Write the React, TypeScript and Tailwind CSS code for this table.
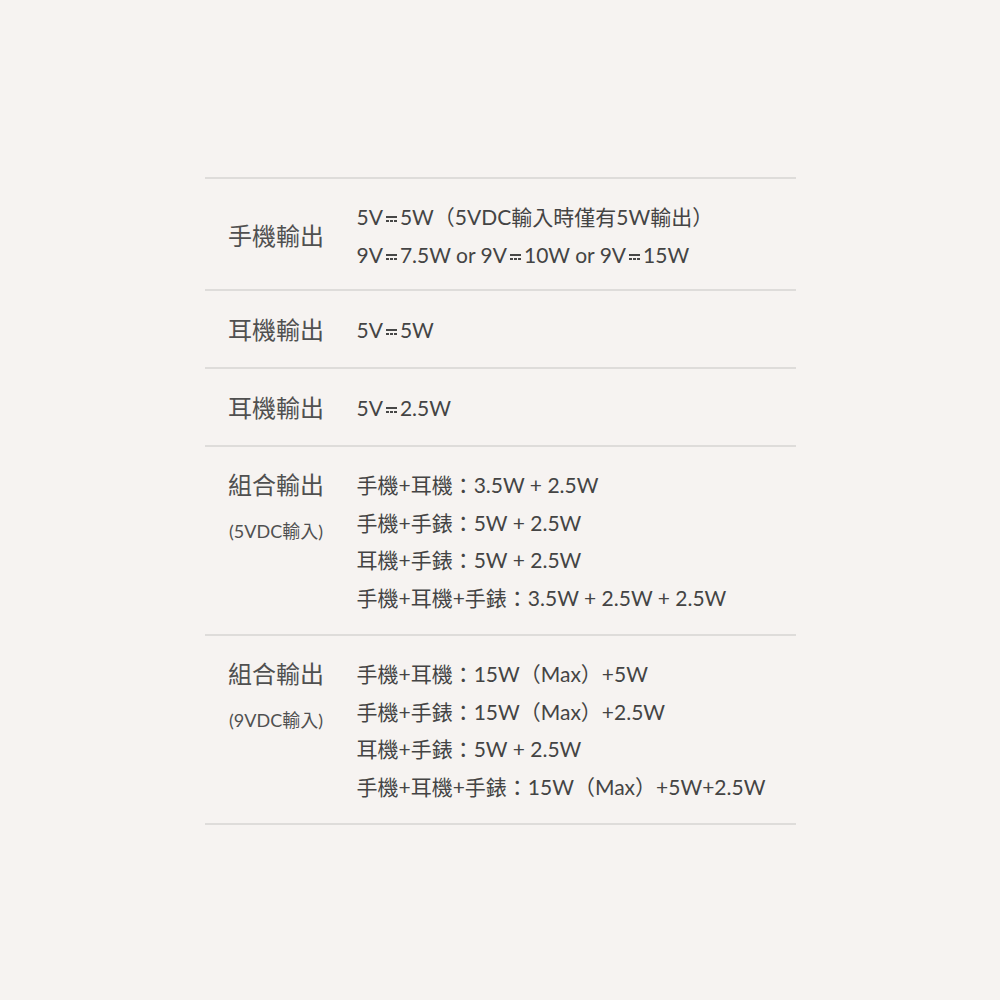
const font = {
  fontFamily: '"Lato", "Noto Sans CJK TC", sans-serif',
};

function Dc() {
  return (
    <span className="inline-flex flex-col justify-center gap-[2px] mx-[3px] align-middle w-[11px] h-[7px] relative -top-[1px]">
      <span className="block h-[2px] bg-[#474747]" />
      <span className="flex justify-between">
        <span className="block w-[3px] h-[2px] bg-[#474747]" />
        <span className="block w-[3px] h-[2px] bg-[#474747]" />
        <span className="block w-[3px] h-[2px] bg-[#474747]" />
      </span>
    </span>
  );
}

interface Row {
  label: string;
  sub?: string;
  pad: string;
  lines: React.ReactNode[];
}

const rows: Row[] = [
  {
    label: "手機輸出",
    pad: "pt-[19px] pb-[15px]",
    lines: [
      <>5V<Dc />5W（5VDC輸入時僅有5W輸出）</>,
      <>9V<Dc />7.5W or 9V<Dc />10W or 9V<Dc />15W</>,
    ],
  },
  { label: "耳機輸出", pad: "pt-[20px] pb-[18px]", lines: [<>5V<Dc />5W</>] },
  { label: "耳機輸出", pad: "pt-[20px] pb-[18px]", lines: [<>5V<Dc />2.5W</>] },
  {
    label: "組合輸出",
    sub: "(5VDC輸入)",
    pad: "pt-[19px] pb-[17px]",
    lines: [
      "手機+耳機：3.5W + 2.5W",
      "手機+手錶：5W + 2.5W",
      "耳機+手錶：5W + 2.5W",
      "手機+耳機+手錶：3.5W + 2.5W + 2.5W",
    ],
  },
  {
    label: "組合輸出",
    sub: "(9VDC輸入)",
    pad: "pt-[19px] pb-[17px]",
    lines: [
      "手機+耳機：15W（Max）+5W",
      "手機+手錶：15W（Max）+2.5W",
      "耳機+手錶：5W + 2.5W",
      "手機+耳機+手錶：15W（Max）+5W+2.5W",
    ],
  },
];

export default function App() {
  return (
    <div className="min-h-[1000px] bg-[#f6f3f1] pt-[177px]" style={font}>
      <div className="mx-auto w-[591px] border-t-2 border-[#dedcda]">
        {rows.map((row, i) => (
          <div
            key={i}
            className={`flex border-b-2 border-[#dedcda] ${row.pad}`}
          >
            <div
              className={`w-[143px] shrink-0 flex flex-col items-center ${
                row.sub ? "justify-start" : "justify-center"
              }`}
            >
              <div className="text-[24px] leading-[38px] text-[#505050]">
                {row.label}
              </div>
              {row.sub && (
                <div className="text-[18px] leading-[30px] mt-[12px] text-[#505050]">
                  {row.sub}
                </div>
              )}
            </div>
            <div className="pl-[9px] flex flex-col">
              {row.lines.map((line, j) => (
                <div
                  key={j}
                  className={`text-[21px] ${
                    row.sub ? "leading-[37.7px]" : "leading-[38px]"
                  } text-[#444] whitespace-nowrap`}
                >
                  {line}
                </div>
              ))}
            </div>
          </div>
        ))}
      </div>
    </div>
  );
}
